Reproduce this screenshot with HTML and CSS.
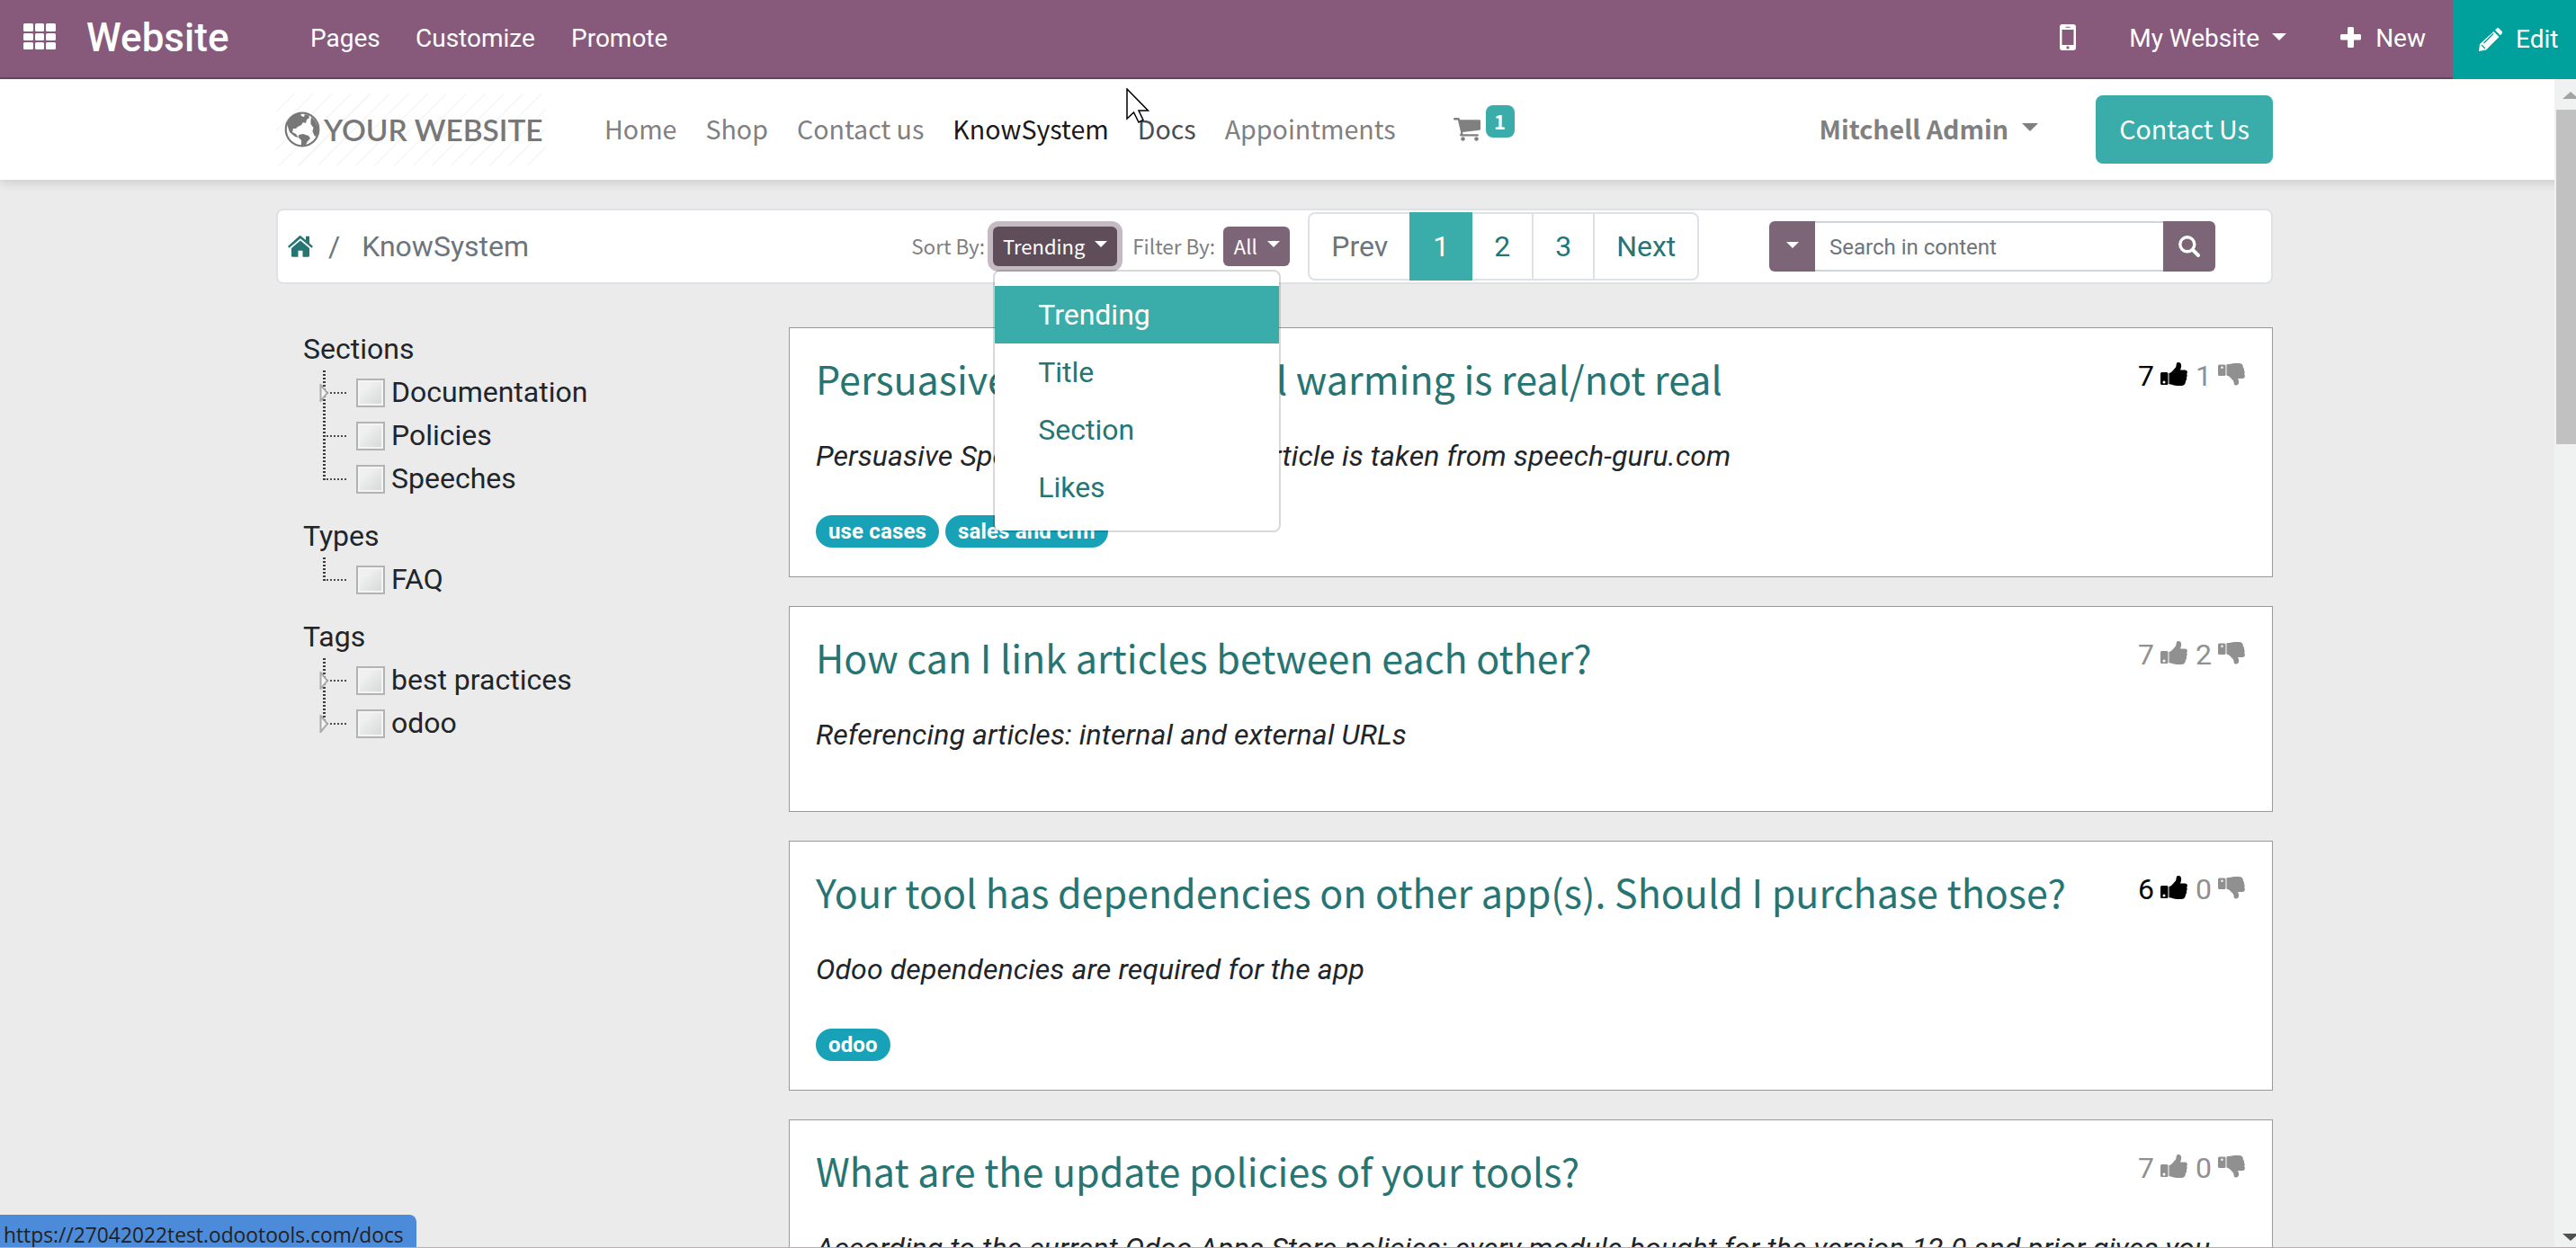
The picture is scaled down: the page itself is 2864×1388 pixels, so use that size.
FILE: index.html
```html
<!DOCTYPE html>
<html lang="en">
<head>
    <meta charset="UTF-8">
    <meta name="viewport" content="width=device-width, initial-scale=1.0">
    <title>KnowSystem | My Website</title>
    <link rel="stylesheet" href="styles.css">
</head>
<body>
    <!-- Shared icons -->
    <svg class="sprite" width="0" height="0">
        <symbol id="thumb-up" viewBox="0 0 30 30">
            <path fill-rule="evenodd" d="M1.500 12h5.500a1.500 1.500 0 0 1 1.500 1.500v11a1.500 1.500 0 0 1-1.500 1.500h-5.500a1.500 1.500 0 0 1-1.500-1.500v-11a1.500 1.500 0 0 1 1.500-1.500zM4 21.500a1.500 1.500 0 1 0 0 3a1.500 1.500 0 0 0 0-3zM9.500 13c3-.5 5-4 7.500-6.500c1-1.500 0-5 2.500-5.500c4-.3 4.500 4 2.500 8.500h5c3 0 3.500 2.500 2.200 4.500c.8 1.500.5 3-.3 4c.4 1.500 0 3-1 3.800c.2 3.500-1.700 5.200-4.900 5.200h-4c-4 0-6-1.800-9.500-1.800z"/>
        </symbol>
        <symbol id="thumb-down" viewBox="0 0 30 30">
            <path fill-rule="evenodd" d="M1.500 3.500h5.500a1.500 1.500 0 0 1 1.500 1.500v9.500a1.500 1.500 0 0 1-1.500 1.500h-5.500a1.500 1.500 0 0 1-1.500-1.500v-9.500a1.500 1.500 0 0 1 1.500-1.500zM4.500 5.500a1.200 1.200 0 1 0 0 2.400a1.200 1.200 0 0 0 0-2.400zM9.500 15.500c3.500.8 6 4.500 7.500 6c1 1.500 0 4.500 2.500 5c4 .3 4.500-4 2.500-7.500h5c3 0 3.500-3 2.200-5c.8-1.500.5-3-.3-4c.4-1.500 0-2.500-1-3.300c.2-3-1.700-4.700-4.900-4.700h-4c-4 0-6 1.300-9.500 1.300z"/>
        </symbol>
        <symbol id="branch-arrow" viewBox="0 0 10 20">
            <path d="M1.500 1v18l7.500-9z" fill="#f5f5f5" stroke="#aaa" stroke-width="2"/>
        </symbol>
    </svg>

    <!-- Backend toolbar -->
    <nav class="main-navbar">
        <svg class="apps-icon" width="36" height="30" viewBox="0 0 36 30" fill="#fff">
            <rect x="0" y="0" width="11" height="9" rx="1.500"/><rect x="13" y="0" width="10" height="9" rx="1.500"/><rect x="25" y="0" width="11" height="9" rx="1.500"/>
            <rect x="0" y="11" width="11" height="8" rx="1.500"/><rect x="13" y="11" width="10" height="8" rx="1.500"/><rect x="25" y="11" width="11" height="8" rx="1.500"/>
            <rect x="0" y="21" width="11" height="8" rx="1.500"/><rect x="13" y="21" width="10" height="8" rx="1.500"/><rect x="25" y="21" width="11" height="8" rx="1.500"/>
        </svg>
        <a class="brand">Website</a>
        <a class="menu-pages">Pages</a>
        <a class="menu-customize">Customize</a>
        <a>Promote</a>
        <div class="systray">
            <svg class="mobile-icon" width="18" height="30" viewBox="0 0 18 30">
                <path fill="#fff" fill-rule="evenodd" d="M3 0h12a3 3 0 0 1 3 3v23a3 3 0 0 1-3 3h-12a3 3 0 0 1-3-3v-23a3 3 0 0 1 3-3zM2.500 6v17h13v-17zM6.500 2.800v1h5v-1zM9 24.300a1.600 1.600 0 1 0 0 3.200a1.600 1.600 0 0 0 0-3.200z"/>
            </svg>
            <a>My Website</a>
            <span class="caret site-caret"></span>
            <svg class="plus-icon" width="23" height="23" viewBox="0 0 23 23"><path fill="#fff" d="M9.500 0h4a1.500 1.500 0 0 1 1.500 1.500v6.500h6.500a1.500 1.500 0 0 1 1.500 1.500v3.500a1.500 1.500 0 0 1-1.500 1.500h-6.500v7a1.500 1.500 0 0 1-1.500 1.500h-4a1.500 1.500 0 0 1-1.500-1.500v-7h-6.500a1.500 1.500 0 0 1-1.500-1.500v-3.500a1.500 1.500 0 0 1 1.500-1.500h6.500v-6.500a1.500 1.500 0 0 1 1.500-1.500z"/></svg>
            <a>New</a>
            <a class="edit-btn">
                <svg width="26" height="26" viewBox="0 0 26 26">
                    <path fill="#fff" d="M16.500 4l6 6l-14.500 14.500l-8 1.500l1-8zM18 2.500l1.700-1.700a2 2 0 0 1 2.800 0l3 3a2 2 0 0 1 0 2.800l-1.700 1.700z"/>
                    <path stroke="#00a09d" stroke-width="1.300" fill="none" d="M5.500 17l10.500-10.500M3 19l4 4"/>
                </svg>
                Edit
            </a>
        </div>
    </nav>

    <!-- Website header -->
    <header class="site-header">
        <div class="logo">
            <svg width="40" height="40" viewBox="0 0 40 40">
                <circle cx="20" cy="20" r="18.300" fill="none" stroke="#777" stroke-width="2.200"/>
                <path fill="#777" d="M6 9c3-4 7-7 12-7l1 3l3 1l1-3l4 1l1 3l-3 2l-1 4l-3-1l-2 3l-4 2l-2 2l-3 0l-1 4l4 2l3 4l-4-1l-6-5l-2-6l-1-3zM16 26l5-1l6 2l2 3l-3 3l-2 4l-3 2l-2-1v-6l-3-3zM30 6l4 4l3 6l.5 7l-2 5l-2-1l-2-5l1-4l-3-4l0-4z"/>
            </svg>
            <span>YOUR WEBSITE</span>
        </div>
        <nav class="site-menu">
            <a>Home</a>
            <a>Shop</a>
            <a>Contact us</a>
            <a class="active">KnowSystem</a>
            <a class="hover">Docs</a>
            <a>Appointments</a>
        </nav>
        <div class="cart">
            <svg width="30" height="26" viewBox="0 0 30 26" fill="#808080">
                <path d="M0 1.200q0-1.200 1.200-1.200h4.200c1.200 0 1.600 1 1.800 2.200h21.600q1.200 0 1.200 1.200v9.200q0 1-1 1.200l-18.800 2.200c.2 1 .3 1.500 0 2.200h16.600q1.200 0 1.200 1.100t-1.200 1.100h-18.600q-1.200 0-1.200-1.100c0-.8 1-2 1.200-2.800l-3.300-14.100h-3.700q-1.200 0-1.200-1.200z"/>
                <circle cx="10.500" cy="23.500" r="2.300"/><circle cx="25.500" cy="23.500" r="2.300"/>
            </svg>
            <sup class="cart-badge">1</sup>
        </div>
        <a class="user-menu">Mitchell Admin <span class="caret"></span></a>
        <a class="contact-btn">Contact Us</a>
    </header>

    <main class="container">
        <div class="toolbar">
            <svg class="home-icon" width="28" height="24" viewBox="0 0 28 24" fill="#267573">
                <path d="M14 5.500l10 8.500v8.500a1.300 1.300 0 0 1-1.300 1.300h-6.200v-7h-5v7h-6.200a1.300 1.300 0 0 1-1.300-1.300v-8.500z"/>
                <path d="M14 0l6 5v-4.200h4v7.700l4 3.500l-1.500 1.700l-12.500-10.500l-12.500 10.500l-1.500-1.700l12.400-11.200q.8-.8 1.600-.8z"/>
            </svg>
            <span class="slash">/</span>
            <span class="crumb">KnowSystem</span>
            <div class="sort">
                <span class="label">Sort By:</span>
                <div class="dropdown">
                    <button class="btn sort-btn">Trending <span class="caret"></span></button>
                    <div class="dropdown-menu">
                        <a class="selected">Trending</a>
                        <a>Title</a>
                        <a>Section</a>
                        <a>Likes</a>
                    </div>
                </div>
            </div>
            <span class="label filter-label">Filter By:</span>
            <button class="btn filter-btn">All <span class="caret"></span></button>
            <div class="pagination">
                <a class="page-prev">Prev</a>
                <a class="current">1</a>
                <a>2</a>
                <a>3</a>
                <a class="page-next">Next</a>
            </div>
            <div class="search">
                <button class="search-options"><span class="caret"></span></button>
                <input type="text" placeholder="Search in content">
                <button class="search-btn">
                    <svg width="24" height="24" viewBox="0 0 24 24" fill="none" stroke="#fff"><circle cx="9.800" cy="9.800" r="8" stroke-width="3.400"/><path d="M16 16l6 6" stroke-width="4" stroke-linecap="round"/></svg>
                </button>
            </div>
        </div>

        <div class="content">
            <aside class="filters">
                <h4>Sections</h4>
                <ul>
                    <li><svg class="branch"><use href="#branch-arrow"/></svg>Documentation</li>
                    <li>Policies</li>
                    <li>Speeches</li>
                </ul>
                <h4>Types</h4>
                <ul>
                    <li>FAQ</li>
                </ul>
                <h4>Tags</h4>
                <ul>
                    <li><svg class="branch"><use href="#branch-arrow"/></svg>best practices</li>
                    <li><svg class="branch"><use href="#branch-arrow"/></svg>odoo</li>
                </ul>
            </aside>

            <section class="articles">
                <article class="card">
                    <div class="card-head">
                        <h3>Persuasive Speech: Global warming is real/not real</h3>
                        <div class="votes">
                            <span class="voted">7 <svg><use href="#thumb-up"/></svg></span>
                            <span>1 <svg><use href="#thumb-down"/></svg></span>
                        </div>
                    </div>
                    <p>Persuasive Speech Examples. This article is taken from speech-guru.com</p>
                    <div class="tags"><span>use cases</span><span>sales and crm</span></div>
                </article>
                <article class="card">
                    <div class="card-head">
                        <h3>How can I link articles between each other?</h3>
                        <div class="votes">
                            <span>7 <svg><use href="#thumb-up"/></svg></span>
                            <span>2 <svg><use href="#thumb-down"/></svg></span>
                        </div>
                    </div>
                    <p>Referencing articles: internal and external URLs</p>
                </article>
                <article class="card">
                    <div class="card-head">
                        <h3>Your tool has dependencies on other app(s). Should I purchase those?</h3>
                        <div class="votes">
                            <span class="voted">6 <svg><use href="#thumb-up"/></svg></span>
                            <span>0 <svg><use href="#thumb-down"/></svg></span>
                        </div>
                    </div>
                    <p>Odoo dependencies are required for the app</p>
                    <div class="tags"><span>odoo</span></div>
                </article>
                <article class="card">
                    <div class="card-head">
                        <h3>What are the update policies of your tools?</h3>
                        <div class="votes">
                            <span>7 <svg><use href="#thumb-up"/></svg></span>
                            <span>0 <svg><use href="#thumb-down"/></svg></span>
                        </div>
                    </div>
                    <p>According to the current Odoo Apps Store policies: every module bought for the version 12.0 and prior gives you</p>
                </article>
            </section>
        </div>
    </main>

    <div class="scrollbar">
        <span class="arrow-up"></span>
        <span class="thumb"></span>
        <span class="arrow-down"></span>
    </div>

    <div class="status-url">https://27042022test.odootools.com/docs</div>
    <div class="window-edge"></div>

    <svg class="cursor" width="26" height="40" viewBox="0 0 26 40">
        <path d="M1 1v33l7.500-7l5.500 11l5-2.500l-5-10.500h10.500z" fill="#fff" stroke="#000" stroke-width="1.500"/>
    </svg>
</body>
</html>
```
FILE: styles.css
```css
* {
    box-sizing: border-box;
}

body {
    margin: 0;
    width: 2864px;
    height: 1388px;
    overflow: hidden;
    position: relative;
    background-color: #ebebeb;
    font-family: Roboto, "Liberation Sans", sans-serif;
    font-size: 32px;
    line-height: 48px;
    color: #212529;
}

h3, h4, p, ul {
    margin: 0;
    padding: 0;
    font-weight: normal;
}

svg {
    display: block;
    flex: none;
}

.sprite {
    position: absolute;
}

.caret {
    display: inline-block;
    border: 8px solid transparent;
    border-top: 8px solid currentColor;
    border-bottom: 0;
}

/* Backend toolbar */
.main-navbar {
    display: flex;
    align-items: center;
    height: 88px;
    padding-left: 26px;
    background-color: #875a7b;
    border-bottom: 2px solid #68465f;
    color: #fff;
    font-size: 28px;
    white-space: nowrap;
}

.apps-icon {
    margin-top: -4px;
}

.brand {
    width: 249px;
    margin: -2px 0 0 34px;
    font-size: 44px;
    font-weight: 500;
}

.menu-pages {
    width: 117px;
}

.menu-customize {
    width: 173px;
}

.systray {
    display: flex;
    align-items: center;
    margin-left: auto;
}

.mobile-icon {
    margin: -2px 59px 0 0;
}

.site-caret {
    margin: -5px 60px 0 14px;
}

.plus-icon {
    margin: -4px 16px 0 0;
}

.edit-btn {
    display: flex;
    align-items: center;
    gap: 15px;
    width: 137px;
    height: 88px;
    margin: 0 0 -2px 30px;
    padding-left: 29px;
    background-color: #00a09d;
}

/* Website header */
.site-header {
    display: flex;
    align-items: center;
    height: 112px;
    padding: 0 337px 0 307px;
    background-color: #fff;
    box-shadow: 0 4px 10px rgba(0, 0, 0, 0.12);
    font-family: "Noto Sans CJK SC", sans-serif;
    font-size: 28.6px;
    color: #808080;
    white-space: nowrap;
}

.logo {
    display: flex;
    align-items: center;
    gap: 4px;
    width: 300px;
    height: 80px;
    padding-left: 9px;
    background: repeating-linear-gradient(135deg, #fff 0 13.500px, #f5f5f5 13.500px 15px);
    font-family: Lato, sans-serif;
    font-size: 33.4px;
    font-weight: 600;
    color: #777;
}

.site-menu {
    display: flex;
    gap: 32px;
    margin: -3px 0 0 65px;
}

.site-menu .active {
    color: #191919;
}

.site-menu .hover {
    color: #4d4d4d;
}

.cart {
    display: flex;
    align-items: center;
    gap: 6px;
    margin-left: 64px;
}

.cart-badge {
    width: 32px;
    height: 36px;
    margin-bottom: 18px;
    border-radius: 8px;
    background-color: #3aadaa;
    color: #fff;
    font-size: 22px;
    font-weight: bold;
    line-height: 35px;
    text-align: center;
}

.user-menu {
    display: flex;
    align-items: center;
    gap: 15px;
    margin: -3px 0 0 auto;
    font-weight: bold;
}

.user-menu .caret {
    border-width: 9px 9px 0;
    margin-top: -2px;
}

.contact-btn {
    width: 197px;
    height: 76px;
    margin-left: 64px;
    border-radius: 8px;
    background-color: #3aadaa;
    color: #fff;
    line-height: 74px;
    text-align: center;
}

/* Breadcrumb, sorting and search */
.container {
    width: 2220px;
    margin: 32px 0 0 307px;
}

.toolbar {
    display: flex;
    align-items: center;
    height: 84px;
    padding: 0 62px 0 11px;
    background-color: #fff;
    border: 2px solid #dee2e6;
    border-radius: 8px;
    color: #6c757d;
    white-space: nowrap;
}

.slash {
    margin-left: 17px;
}

.crumb {
    width: 611px;
    margin-left: 24px;
}

.sort {
    display: flex;
    align-items: center;
    gap: 8px;
}

.label {
    width: 83px;
    margin-top: -2px;
    font-family: "Noto Sans CJK SC", sans-serif;
    font-size: 22.5px;
    color: #808080;
}

.filter-label {
    width: 101px;
    margin-left: 17px;
}

.dropdown {
    position: relative;
}

.btn {
    display: flex;
    align-items: center;
    justify-content: center;
    gap: 11px;
    height: 44px;
    padding: 0 0 2px;
    border: none;
    border-radius: 6px;
    background-color: #7c6576;
    color: #fff;
    font-family: "Noto Sans CJK SC", sans-serif;
    font-size: 22px;
}

.btn .caret,
.search .caret {
    border-width: 7px 7px 0;
    margin-top: -4px;
}

.sort-btn {
    width: 138px;
    background-color: #5f4d5a;
    box-shadow: 0 0 0 6px rgba(124, 101, 118, 0.45);
}

.filter-btn {
    width: 74px;
}

.dropdown-menu {
    position: absolute;
    top: 48px;
    left: 0;
    z-index: 10;
    width: 320px;
    height: 292px;
    padding: 16px 0;
    background-color: #fff;
    background-clip: padding-box;
    border: 2px solid rgba(0, 0, 0, 0.15);
    border-radius: 8px;
}

.dropdown-menu a {
    display: block;
    padding: 8px 48px;
    color: #267573;
}

.dropdown-menu .selected {
    background-color: #3aadaa;
    color: #fff;
}

.pagination {
    display: flex;
    height: 76px;
    margin-left: 20px;
    border: 2px solid #dee2e6;
    border-radius: 8px;
    line-height: 72px;
    text-align: center;
}

.pagination a {
    width: 68px;
    border-right: 2px solid #dee2e6;
    color: #267573;
}

.pagination .page-prev {
    width: 111px;
    border-right: none;
    color: #6c757d;
}

.pagination .current {
    width: 70px;
    height: 76px;
    margin-top: -2px;
    border: none;
    background-color: #3aadaa;
    color: #fff;
    line-height: 76px;
}

.pagination .page-next {
    width: 114px;
    border-right: none;
}

.search {
    display: flex;
    width: 496px;
    height: 56px;
    margin-left: auto;
}

.search button {
    display: flex;
    align-items: center;
    justify-content: center;
    border: none;
    padding: 0;
    background-color: #7c6576;
    color: #fff;
}

.search .search-options {
    width: 51px;
    border-radius: 6px 0 0 6px;
}

.search .search-btn {
    width: 58px;
    border-radius: 0 6px 6px 0;
}

.search input {
    flex: 1;
    min-width: 0;
    padding: 1px 16px 0;
    border: 2px solid #ced4da;
    border-width: 2px 0;
    font-family: inherit;
    font-size: 24px;
}

.search input::placeholder {
    color: #6c757d;
}

/* Filter tree */
.content {
    display: flex;
    margin-top: 48px;
}

.filters {
    width: 570px;
    padding-left: 30px;
}

.filters h4 {
    font-size: 32px;
    line-height: 48px;
}

.filters ul {
    margin-bottom: 16px;
    padding-left: 22px;
    list-style: none;
}

.filters li {
    position: relative;
    height: 48px;
    padding-left: 76px;
}

/* dotted branch lines */
.filters li::before {
    content: "";
    position: absolute;
    left: 0;
    top: 0;
    width: 26px;
    height: 100%;
    background:
        repeating-linear-gradient(#3c3c3c 0 2px, transparent 2px 4px) 0 0 / 3px 100% no-repeat,
        repeating-linear-gradient(90deg, #4c4c4c 0 2px, transparent 2px 4px) 0 24px / 26px 2px no-repeat;
}

.filters li:last-child::before {
    height: 26px;
}

.branch {
    position: absolute;
    left: -4px;
    top: 15px;
    width: 10px;
    height: 20px;
}

.filters li::after {
    content: "";
    position: absolute;
    left: 37px;
    top: 9px;
    width: 28px;
    height: 28px;
    border: 2px solid #b3b3b3;
    background: linear-gradient(135deg, #f0f0f0 30%, #d4d6d7);
    box-shadow: inset 0 0 0 2px #f4f4f4;
}

/* Articles */
.articles {
    display: flex;
    flex-direction: column;
    gap: 32px;
    width: 1650px;
}

.card {
    height: 278px;
    padding: 30px 30px 0 29px;
    background-color: #fff;
    border: 1px solid #999;
    white-space: nowrap;
}

.card:nth-child(2) {
    height: 229px;
}

.card-head {
    display: flex;
    justify-content: space-between;
    height: 88px;
}

.card h3 {
    margin-top: -4px;
    font-family: "Noto Sans CJK SC", sans-serif;
    font-size: 43px;
    line-height: 58px;
    color: #267573;
}

.votes {
    display: flex;
    gap: 9px;
    margin-top: -1px;
    color: #909090;
}

.votes span {
    display: flex;
    gap: 7px;
}

.votes .voted {
    color: #000;
}

.votes svg {
    width: 30px;
    height: 30px;
    margin-top: 8px;
    fill: currentColor;
}

.card p {
    font-style: italic;
    letter-spacing: 0.12px;
}

.tags {
    display: flex;
    gap: 7px;
    margin-top: 42px;
}

.tags span {
    height: 36px;
    padding: 0 14px;
    border-radius: 18px;
    background-color: #17a2b8;
    color: #fff;
    font-size: 24px;
    font-weight: bold;
    line-height: 36px;
    letter-spacing: 0.15px;
}

/* Browser chrome over the page */
.scrollbar {
    position: absolute;
    top: 88px;
    right: 0;
    width: 24px;
    height: 1299px;
    display: flex;
    flex-direction: column;
    align-items: flex-end;
    overflow: hidden;
    background-color: #f0f2f2;
}

.scrollbar .thumb {
    width: 22px;
    height: 372px;
    margin-top: 12px;
    background-color: #c1c1c1;
}

.arrow-up {
    margin: 14px -3px 0 0;
    border: 9px solid transparent;
    border-top: 0;
    border-bottom: 8px solid #a3a3a3;
}

.arrow-down {
    margin: auto -3px 7px 0;
    border: 9px solid transparent;
    border-bottom: 0;
    border-top: 8px solid #505050;
}

.status-url {
    position: absolute;
    left: 0;
    bottom: 0;
    width: 463px;
    height: 37px;
    padding-left: 4px;
    border-top-right-radius: 8px;
    background-color: #4c8bd9;
    color: #222;
    font-family: "Open Sans", sans-serif;
    font-size: 22.8px;
    line-height: 46px;
}

.window-edge {
    position: absolute;
    left: 0;
    bottom: 0;
    width: 100%;
    height: 1px;
    background-color: #b5adb2;
}

.cursor {
    position: absolute;
    left: 1252px;
    top: 98px;
}
```
